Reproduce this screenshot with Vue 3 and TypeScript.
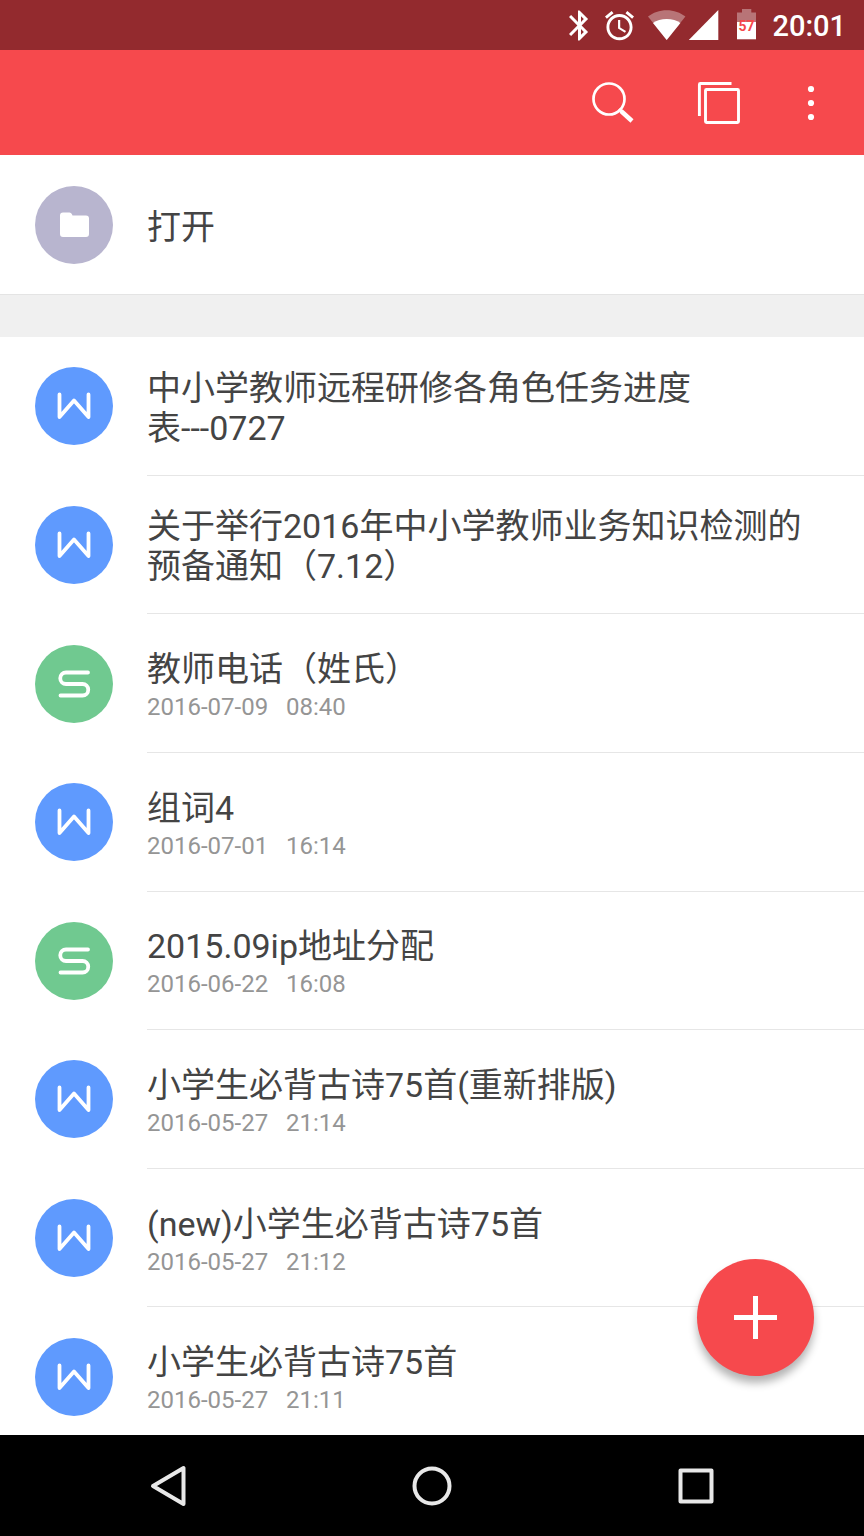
<script setup lang="ts">
type DocKind = 'writer' | 'sheet'

interface DocItem {
  kind: DocKind
  title: string
  date?: string
  time?: string
}

const docs: DocItem[] = [
  { kind: 'writer', title: '中小学教师远程研修各角色任务进度\n表---0727' },
  { kind: 'writer', title: '关于举行2016年中小学教师业务知识检测的预备通知（7.12）' },
  { kind: 'sheet', title: '教师电话（姓氏）', date: '2016-07-09', time: '08:40' },
  { kind: 'writer', title: '组词4', date: '2016-07-01', time: '16:14' },
  { kind: 'sheet', title: '2015.09ip地址分配', date: '2016-06-22', time: '16:08' },
  { kind: 'writer', title: '小学生必背古诗75首(重新排版)', date: '2016-05-27', time: '21:14' },
  { kind: 'writer', title: '(new)小学生必背古诗75首', date: '2016-05-27', time: '21:12' },
  { kind: 'writer', title: '小学生必背古诗75首', date: '2016-05-27', time: '21:11' },
]

const glyphs: Record<DocKind, string> = {
  writer: 'M24.5 27.5V50L39 33.5L53.5 50V27.5',
  sheet: 'M53 27.5H31a5.75 5.75 0 0 0 0 11.5H47.5a5.75 5.75 0 0 1 0 11.5H25.5',
}
</script>

<template>
  <div class="screen">
    <div class="status">
      <svg width="36" height="32" viewBox="0 0 36 32" fill="#fff" aria-hidden="true">
        <path transform="translate(1.5 -1.5) scale(1.5)" d="M17.71 7.71L12 2h-1v7.59L6.41 5 5 6.41 10.59 12 5 17.59 6.41 19 11 14.41V22h1l5.71-5.71-4.3-4.29 4.3-4.29zM13 5.83l1.88 1.88L13 9.59V5.83zm1.88 10.46L13 18.17v-3.76l1.88 1.88z" />
      </svg>
      <svg width="48" height="32" viewBox="0 0 48 32" fill="#fff" aria-hidden="true">
        <path transform="translate(6.1 -.7) scale(1.45)" d="M22 5.72l-4.6-3.86-1.29 1.53 4.6 3.86L22 5.72zM7.88 3.39L6.6 1.86 2 5.71l1.29 1.53 4.59-3.85zM12.5 8H11v6l4.75 2.85.75-1.23-4-2.37V8zM12 4c-4.97 0-9 4.03-9 9s4.02 9 9 9c4.97 0 9-4.03 9-9s-4.03-9-9-9zm0 16c-3.87 0-7-3.13-7-7s3.13-7 7-7 7 3.13 7 7-3.13 7-7 7z" />
      </svg>
      <svg width="44" height="32" viewBox="0 0 44 32" fill="#fff" aria-hidden="true">
        <path opacity=".35" d="M22.7 31L4 7.5C9 3.5 15.5 1.2 22.7 1.2S36.4 3.5 41.4 7.5z" />
        <path d="M22.7 31L9 14C12.5 11.4 17.5 10 22.7 10S33 11.4 36.4 14z" />
      </svg>
      <svg width="40" height="32" viewBox="0 0 40 32" fill="#fff" aria-hidden="true">
        <path d="M.8 31H30.3V1z" />
      </svg>
      <svg width="36" height="32" viewBox="0 0 36 32" fill="#fff" aria-hidden="true">
        <path opacity=".35" d="M9 3.5h5V0h9.3v3.5H28V13H9z" />
        <path d="M9 13h19v17.3H9z" />
        <text x="18.5" y="22" text-anchor="middle" class="charge">57</text>
      </svg>
      <time class="clock">20:01</time>
    </div>

    <header class="toolbar">
      <button type="button" class="tool" aria-label="搜索">
        <svg width="46" height="46" viewBox="0 0 46 46" fill="none" stroke="#fff" aria-hidden="true">
          <circle cx="19" cy="19" r="15.5" stroke-width="2.7" />
          <path d="M31 31L42 41" stroke-width="4.5" />
          <path d="M29 29l4 4" stroke-width="3" />
        </svg>
      </button>
      <button type="button" class="tool" aria-label="文档窗口">
        <svg width="46" height="46" viewBox="0 0 46 46" fill="none" stroke="#fff" stroke-width="2.9" aria-hidden="true">
          <rect x="9.5" y="9.5" width="33" height="33" rx="1" />
          <path d="M3.4 36V4.5a1 1 0 0 1 1-1H35.5" />
        </svg>
      </button>
      <button type="button" class="tool more" aria-label="更多">
        <svg width="46" height="46" viewBox="0 0 46 46" fill="#fff" aria-hidden="true">
          <circle cx="23" cy="9" r="3.1" />
          <circle cx="23" cy="23" r="3.1" />
          <circle cx="23" cy="37" r="3.1" />
        </svg>
      </button>
    </header>

    <main class="content">
      <a href="#open" class="row open">
        <svg class="badge folder" viewBox="0 0 78 78" aria-hidden="true">
          <path fill="#fff" d="M28 26.5h6.5a2.5 2.5 0 0 1 2.3 1.5l.7 1.5H51a3 3 0 0 1 3 3V48a3 3 0 0 1-3 3H28a3 3 0 0 1-3-3V29.5a3 3 0 0 1 3-3z" />
        </svg>
        <span class="title">打开</span>
      </a>
      <div class="band"></div>
      <ul class="list">
        <li v-for="doc in docs" :key="doc.title">
          <a href="#doc" class="row">
            <svg class="badge" :class="doc.kind" viewBox="0 0 78 78" aria-hidden="true">
              <path :d="glyphs[doc.kind]" fill="none" stroke="#fff" stroke-width="3.8" stroke-linecap="round" stroke-linejoin="round" />
            </svg>
            <span class="body" :class="{ dated: doc.date }">
              <span class="title">{{ doc.title }}</span>
              <span v-if="doc.date" class="meta">{{ doc.date }}&nbsp;&nbsp; {{ doc.time }}</span>
            </span>
          </a>
        </li>
      </ul>
      <button type="button" class="fab" aria-label="新建">
        <svg width="43" height="43" viewBox="0 0 43 43" fill="none" stroke="#fff" stroke-width="5" aria-hidden="true">
          <path d="M21.5 0v43M0 21.5h43" />
        </svg>
      </button>
    </main>

    <nav class="nav">
      <button type="button" aria-label="返回">
        <svg width="46" height="46" viewBox="0 0 46 46" fill="none" stroke="#e8e8e8" stroke-width="4" stroke-linejoin="round" aria-hidden="true">
          <path d="M8 23L38.5 5V41z" />
        </svg>
      </button>
      <button type="button" aria-label="主页">
        <svg width="46" height="46" viewBox="0 0 46 46" fill="none" stroke="#e8e8e8" stroke-width="4" aria-hidden="true">
          <circle cx="23" cy="23" r="17.5" />
        </svg>
      </button>
      <button type="button" aria-label="最近任务">
        <svg width="46" height="46" viewBox="0 0 46 46" fill="none" stroke="#e8e8e8" stroke-width="4" stroke-linejoin="round" aria-hidden="true">
          <rect x="7.5" y="7.5" width="31" height="31" />
        </svg>
      </button>
    </nav>
  </div>
</template>

<style>
body {
  margin: 0;
}
</style>

<style scoped>
.screen {
  display: flex;
  flex-direction: column;
  height: 100vh;
  overflow: hidden;
  background: #fff;
  color: #444;
  font-family: Roboto, "Noto Sans CJK SC", sans-serif;
}

svg {
  display: block;
  flex: none;
}

button {
  display: flex;
  align-items: center;
  justify-content: center;
  padding: 0;
  border: 0;
  background: none;
}

.status {
  display: flex;
  flex: none;
  align-items: center;
  justify-content: flex-end;
  height: 50px;
  padding-right: 18px;
  background: #932a2e;
}

.charge {
  font-size: 14px;
  font-weight: 700;
  fill: #f6484c;
}

.clock {
  padding-top: 2px;
  margin-left: 8px;
  color: #fff;
  font-size: 29px;
  font-weight: 500;
  line-height: 40px;
}

.toolbar {
  display: flex;
  flex: none;
  justify-content: flex-end;
  height: 105px;
  padding-right: 14px;
  background: #f6494d;
}

.tool {
  width: 106px;
}

.tool.more {
  width: 78px;
}

.content {
  position: relative;
  display: flex;
  flex: 1;
  flex-direction: column;
  min-height: 0;
  overflow: hidden;
}

.row {
  display: flex;
  align-items: center;
  gap: 34px;
  height: 100%;
  padding-left: 35px;
  color: inherit;
  text-decoration: none;
}

.row.open {
  flex: none;
  height: 139px;
}

.badge {
  width: 78px;
  height: 78px;
  border-radius: 50%;
}

.folder {
  background: #b8b5cf;
}

.writer {
  background: #5f9afe;
}

.sheet {
  background: #70c990;
}

.band {
  flex: none;
  height: 42px;
  border-top: 1px solid #e4e4e4;
  background: #f0f0f0;
}

/* The last row runs slightly under the navigation bar. */
.list {
  display: grid;
  flex: 1;
  grid-auto-rows: 1fr;
  margin: 0 0 -11px;
  padding: 0;
  list-style: none;
}

.list li {
  min-height: 0;
}

.body {
  display: flex;
  flex: 1;
  flex-direction: column;
  justify-content: center;
  align-self: stretch;
  padding-right: 50px;
  border-bottom: 1px solid #e6e6e6;
}

.body.dated {
  padding-top: 4px;
}

.title {
  padding-top: 4px;
  font-size: 34px;
  line-height: 40px;
  white-space: pre-line;
}

.meta {
  color: #959595;
  font-size: 24px;
  line-height: 36px;
}

.fab {
  position: absolute;
  right: 50px;
  bottom: 59px;
  width: 117px;
  height: 117px;
  border-radius: 50%;
  background: #f6494d;
  box-shadow: 0 7px 9px rgba(0, 0, 0, 0.3);
}

.nav {
  display: flex;
  flex: none;
  height: 101px;
  padding: 0 36px;
  background: #000;
}

.nav button {
  flex: 1;
}
</style>
